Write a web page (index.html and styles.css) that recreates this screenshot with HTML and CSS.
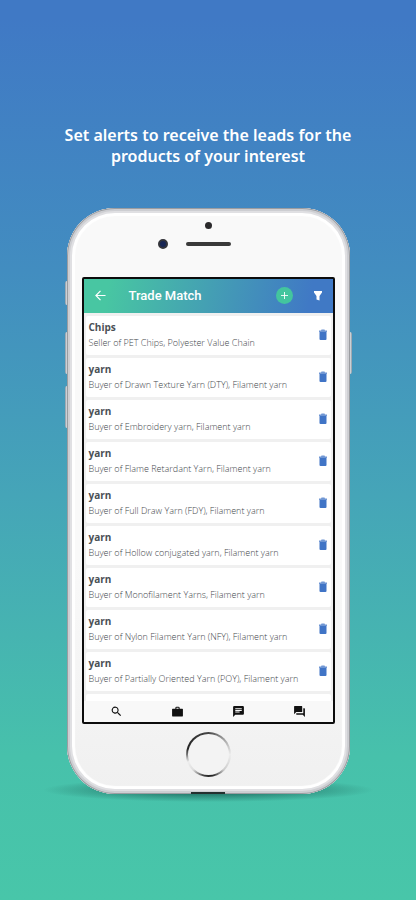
FILE: index.html
```
<!DOCTYPE html>
<html lang="en">
<head>
  <meta charset="UTF-8" />
  <meta name="viewport" content="width=device-width, initial-scale=1" />
  <title>Trade Match</title>
  <link rel="stylesheet" href="styles.css">
</head>
<body>

<!-- shared icons -->
<svg class="sprite" aria-hidden="true">
  <symbol id="trash" viewBox="0 0 24 24">
    <path d="M5 6h14v14a2 2 0 0 1-2 2H7a2 2 0 0 1-2-2z" />
    <path d="M4 3h4l1-2h6l1 2h4v3H4z" opacity=".75" />
  </symbol>
</svg>

<main>
  <h1>Set alerts to receive the leads for the products of your interest</h1>

  <div class="phone">
    <span class="side-btn mute"></span>
    <span class="side-btn vol-up"></span>
    <span class="side-btn vol-down"></span>
    <span class="side-btn power"></span>

    <div class="phone-body">
      <div class="phone-top">
        <span class="sensor"></span>
        <div class="ear">
          <span class="camera"></span>
          <span class="speaker"></span>
        </div>
      </div>

      <div class="screen">
        <header class="app-bar">
          <button type="button" class="icon-btn" aria-label="Back">
            <svg class="back" viewBox="0 0 12 12"><path d="M11.500 6H1.500M6 1L1 6l5 5" /></svg>
          </button>
          <h2>Trade Match</h2>
          <button type="button" class="icon-btn add" aria-label="Add alert">
            <svg viewBox="0 0 8 8"><path d="M4 0v8M0 4h8" /></svg>
          </button>
          <button type="button" class="icon-btn" aria-label="Filter">
            <svg class="filter" viewBox="0 0 10 10"><path d="M1 0h8v1.500L6.500 5v4.500L3.500 8.500V5L1 1.500z" /></svg>
          </button>
        </header>

        <ul class="leads">
          <li>
            <div class="lead"><h3>Chips</h3><p>Seller of PET Chips, Polyester Value Chain</p></div>
            <button type="button" class="icon-btn" aria-label="Delete"><svg class="trash"><use href="#trash" /></svg></button>
          </li>
          <li>
            <div class="lead"><h3>yarn</h3><p>Buyer of Drawn Texture Yarn (DTY), Filament yarn</p></div>
            <button type="button" class="icon-btn" aria-label="Delete"><svg class="trash"><use href="#trash" /></svg></button>
          </li>
          <li>
            <div class="lead"><h3>yarn</h3><p>Buyer of Embroidery yarn, Filament yarn</p></div>
            <button type="button" class="icon-btn" aria-label="Delete"><svg class="trash"><use href="#trash" /></svg></button>
          </li>
          <li>
            <div class="lead"><h3>yarn</h3><p>Buyer of Flame Retardant Yarn, Filament yarn</p></div>
            <button type="button" class="icon-btn" aria-label="Delete"><svg class="trash"><use href="#trash" /></svg></button>
          </li>
          <li>
            <div class="lead"><h3>yarn</h3><p>Buyer of Full Draw Yarn (FDY), Filament yarn</p></div>
            <button type="button" class="icon-btn" aria-label="Delete"><svg class="trash"><use href="#trash" /></svg></button>
          </li>
          <li>
            <div class="lead"><h3>yarn</h3><p>Buyer of Hollow conjugated yarn, Filament yarn</p></div>
            <button type="button" class="icon-btn" aria-label="Delete"><svg class="trash"><use href="#trash" /></svg></button>
          </li>
          <li>
            <div class="lead"><h3>yarn</h3><p>Buyer of Monofilament Yarns, Filament yarn</p></div>
            <button type="button" class="icon-btn" aria-label="Delete"><svg class="trash"><use href="#trash" /></svg></button>
          </li>
          <li>
            <div class="lead"><h3>yarn</h3><p>Buyer of Nylon Filament Yarn (NFY), Filament yarn</p></div>
            <button type="button" class="icon-btn" aria-label="Delete"><svg class="trash"><use href="#trash" /></svg></button>
          </li>
          <li>
            <div class="lead"><h3>yarn</h3><p>Buyer of Partially Oriented Yarn (POY), Filament yarn</p></div>
            <button type="button" class="icon-btn" aria-label="Delete"><svg class="trash"><use href="#trash" /></svg></button>
          </li>
          <li class="next"></li>
        </ul>

        <nav class="tabs">
          <a href="#" aria-label="Search">
            <svg viewBox="0 0 24 24"><path d="M15.500 14h-.8l-.3-.3A6.500 6.500 0 1 0 13.700 14.400l.3.300v.8l5 5 1.500-1.500zm-6 0a4.500 4.500 0 1 1 0-9 4.500 4.500 0 0 1 0 9z" /></svg>
          </a>
          <a href="#" aria-label="Business">
            <svg viewBox="0 0 24 24"><path d="M3 7h5V5.500A2.500 2.500 0 0 1 10.500 3h3A2.500 2.500 0 0 1 16 5.500V7h5a1 1 0 0 1 1 1v12a1 1 0 0 1-1 1H3a1 1 0 0 1-1-1V8a1 1 0 0 1 1-1zm7 0h4V5h-4z" /></svg>
          </a>
          <a href="#" aria-label="Messages">
            <svg viewBox="0 0 24 24"><path d="M4 2h16a2 2 0 0 1 2 2v12a2 2 0 0 1-2 2H6l-4 4V4a2 2 0 0 1 2-2zm2 4v2h12V6zm0 3v2h12V9zm0 3v2h8v-2z" fill-rule="evenodd" /></svg>
          </a>
          <a href="#" aria-label="Forum">
            <svg viewBox="0 0 24 24"><path d="M21 6h-2v9H6v2a1 1 0 0 0 1 1h11l4 4V7a1 1 0 0 0-1-1zm-4 6V3a1 1 0 0 0-1-1H3a1 1 0 0 0-1 1v14l4-4h10a1 1 0 0 0 1-1z" /></svg>
          </a>
        </nav>
      </div>

      <button type="button" class="home" aria-label="Home"></button>
    </div>
  </div>
</main>

</body>
</html>
```
FILE: styles.css
```
* {
  box-sizing: border-box;
}

body {
  margin: 0;
  min-height: 100vh;
  font-family: "Open Sans", "Noto Sans", sans-serif;
  background: linear-gradient(#4079c5 2%, #428dc0 30%, #45a5b8 55%, #47c1ab 84%, #48c6a9);
}

main {
  display: flex;
  flex-direction: column;
  align-items: center;
  padding: 125px 32px 40px;
}

h1, h2, h3, p, ul {
  margin: 0;
}

h1 {
  max-width: 300px;
  font-family: "Noto Sans", sans-serif;
  font-size: 16px;
  line-height: 21px;
  font-weight: 600;
  text-align: center;
  color: #fff;
}

.sprite {
  position: absolute;
  width: 0;
  height: 0;
}

/* phone */
.phone {
  position: relative;
  width: 100%;
  max-width: 283px;
  margin-top: 41px;
}

/* soft shadow on the ground */
.phone::before {
  content: "";
  position: absolute;
  left: -24px;
  right: -24px;
  bottom: -8px;
  height: 24px;
  background: radial-gradient(closest-side, rgba(10, 60, 55, 0.8), rgba(10, 60, 55, 0.3) 60%, transparent);
}

/* charging port */
.phone::after {
  content: "";
  position: absolute;
  left: 44%;
  right: 44%;
  bottom: 0;
  height: 2px;
  background: #24302f;
}

.phone-body {
  position: relative;
  display: flex;
  flex-direction: column;
  align-items: center;
  padding: 0 15px 17px;
  border-radius: 48px;
  background: linear-gradient(#f9f9f9 60%, #f0f0f0);
  box-shadow:
    inset 0 0 0 1px #9b9da1,
    inset 0 0 0 3px #cdced2,
    inset 0 0 0 5px #e0e0e3,
    inset 0 0 1px 8px #fff;
}

.side-btn {
  position: absolute;
  left: -2px;
  width: 4px;
  height: 42px;
  border-radius: 2px;
  background: linear-gradient(90deg, #8a96a0, #dfe4e8 50%);
}

.mute {
  top: 73px;
  height: 24px;
}

.vol-up {
  top: 124px;
}

.vol-down {
  top: 178px;
}

.power {
  top: 124px;
  left: auto;
  right: -2px;
  background: linear-gradient(270deg, #8a96a0, #dfe4e8 50%);
}

.phone-top {
  display: flex;
  flex-direction: column;
  align-items: center;
  gap: 10px;
  height: 69px;
  padding-top: 14px;
}

.sensor {
  width: 7px;
  height: 7px;
  border-radius: 50%;
  background: #2b2a2c;
}

.ear {
  display: flex;
  align-items: center;
  gap: 18px;
  padding-right: 28px;
}

.camera {
  width: 10px;
  height: 10px;
  border-radius: 50%;
  border: 2px solid #33343a;
  background: #172554;
}

.speaker {
  width: 45px;
  height: 4px;
  border-radius: 2px;
  background: #3a3a3a;
}

/* app */
.screen {
  width: 100%;
  border: 2px solid #0c0c0c;
  border-radius: 2px;
  background: #f0f0f0;
  overflow: hidden;
}

.icon-btn {
  display: flex;
  align-items: center;
  justify-content: center;
  width: 16px;
  height: 16px;
  padding: 0;
  border: 0;
  background: none;
  cursor: pointer;
}

.app-bar {
  display: flex;
  align-items: center;
  height: 34px;
  padding: 0 7px 1px 9px;
  background: linear-gradient(100deg, #48c6a2 10%, #4079c5 90%);
}

.app-bar h2 {
  flex: 1;
  padding-left: 20px;
  font-family: Roboto, sans-serif;
  font-size: 13px;
  line-height: 16px;
  font-weight: 500;
  color: #fff;
}

.back {
  width: 11px;
  height: 11px;
  fill: none;
  stroke: #fff;
  stroke-width: 1.3;
}

.app-bar .add {
  width: 17px;
  height: 17px;
  margin-right: 17px;
  border-radius: 50%;
  background: #43c59e;
}

.add svg {
  width: 7px;
  height: 7px;
  stroke: #fff;
  stroke-width: 1;
}

.filter {
  width: 10px;
  height: 10px;
  fill: #fff;
}

.leads {
  display: flex;
  flex-direction: column;
  gap: 3px;
  padding: 3px 2px 0;
  list-style: none;
}

.leads li {
  display: flex;
  align-items: center;
  padding: 3px 0 4px 3px;
  border-radius: 2px;
  background: #fff;
}

.leads .next {
  height: 7px;
  padding: 0;
  border-radius: 2px 2px 0 0;
}

.lead {
  flex: 1;
}

.lead h3 {
  font-size: 10px;
  line-height: 16px;
  font-weight: 700;
  color: #4a5056;
}

.lead p {
  font-size: 9px;
  line-height: 16px;
  font-weight: 300;
  color: #44484c;
}

.trash {
  width: 12px;
  height: 12px;
  fill: #4074c6;
}

.tabs {
  display: flex;
  padding: 0 2px;
  background: #f8f8f8;
}

.tabs a {
  flex: 1;
  display: flex;
  align-items: center;
  justify-content: center;
  height: 21px;
}

.tabs svg {
  width: 13px;
  height: 13px;
  fill: #111;
}

.home {
  width: 45px;
  height: 45px;
  margin-top: 8px;
  padding: 0;
  border: 2px solid transparent;
  border-radius: 50%;
  background:
    linear-gradient(#f3f3f3, #f3f3f3) padding-box,
    conic-gradient(from 0deg, #444, #aaa 50deg, #eee 90deg, #ccc 135deg, #222 170deg, #333 190deg, #ddd 225deg, #eee 250deg, #222 285deg, #444) border-box;
  cursor: pointer;
}
```
